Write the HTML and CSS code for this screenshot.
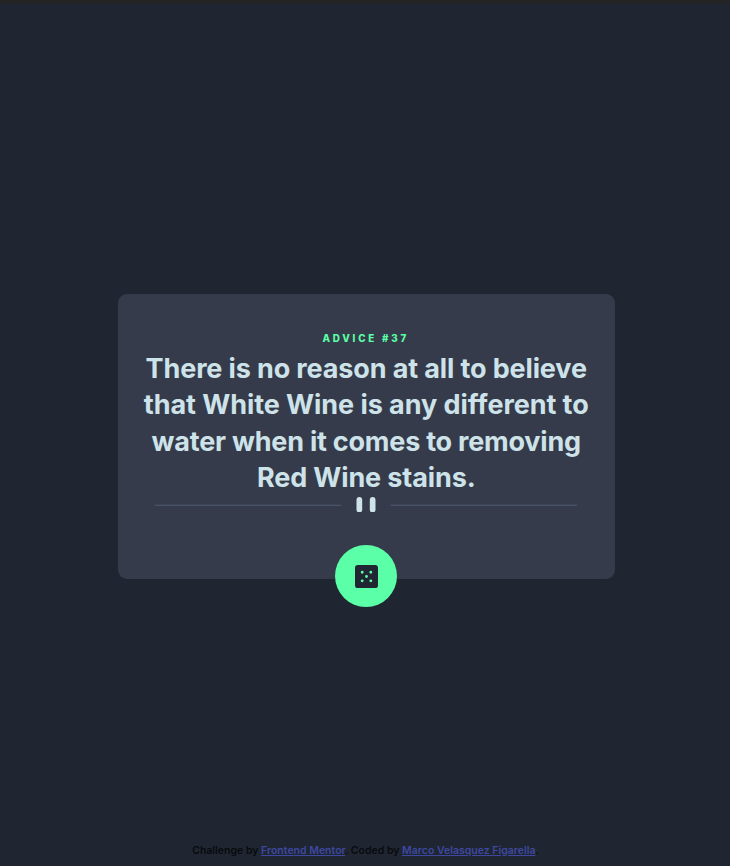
FILE: index.html
```html
<!DOCTYPE html>
<html lang="en">
<head>
<meta charset="utf-8">
<title>Advice generator</title>
<link rel="stylesheet" href="styles.css">
</head>
<body>
<main class="page">
  <section class="card">
    <h1 class="label">ADVICE #37</h1>
    <p class="quote">
      <span class="line line-1">There is no reason at all to believe</span>
      <span class="line line-2">that White Wine is any different to</span>
      <span class="line line-3">water when it comes to removing</span>
      <span class="line line-4">Red Wine stains.</span>
    </p>
    <svg class="divider" viewBox="0 0 444 16" preserveAspectRatio="none" aria-hidden="true">
      <path fill="#4f5d74" d="M0 8h196v1H0zM248 8h196v1H248z"/>
      <g fill="#cee3e9"><rect x="212" width="6" height="16" rx="3"/><rect x="226" width="6" height="16" rx="3"/></g>
    </svg>
    <button class="dice" aria-label="New advice">
      <svg class="dice-icon" viewBox="0 0 24 24" aria-hidden="true">
        <path fill="#202733" d="M21 0H3a3 3 0 0 0-3 3v18a3 3 0 0 0 3 3h18a3 3 0 0 0 3-3V3a3 3 0 0 0-3-3ZM7.500 18a1.500 1.500 0 1 1 0-3 1.500 1.500 0 0 1 0 3Zm0-9a1.500 1.500 0 1 1 0-3 1.500 1.500 0 0 1 0 3Zm4.500 4.500a1.500 1.500 0 1 1 0-3 1.500 1.500 0 0 1 0 3Zm4.500 4.500a1.500 1.500 0 1 1 0-3 1.500 1.500 0 0 1 0 3Zm0-9a1.500 1.500 0 1 1 0-3 1.500 1.500 0 0 1 0 3Z"/>
      </svg>
    </button>
  </section>
</main>
<footer class="attribution"><span class="by">Challenge by</span> <a class="mentor" href="#">Frontend Mentor</a>. <span class="coded">Coded by</span> <a class="author" href="#">Marco Velasquez Figarella</a>.</footer>
</body>
</html>
```
FILE: styles.css
```css
* { box-sizing: border-box; }

body {
  margin: 0;
  height: 866px;
  display: flex;
  flex-direction: column;
  overflow: hidden;
  background: #1f2631;
  border-top: 4px solid #242424;
  font-family: Inter, "Open Sans", sans-serif;
}

.page {
  flex: 1;
  padding: 290px 0 0 118px;
}

.card {
  position: relative;
  width: 496.500px;
  height: 284.500px;
  padding-top: 38px;
  display: flex;
  flex-direction: column;
  align-items: center;
  background: #353b4a;
  border-radius: 9px;
}

.label {
  margin: 0 1px 0 0;
  height: 19px;
  font-size: 9.800px;
  line-height: 13px;
  font-weight: 800;
  letter-spacing: 2.800px;
  color: #5bffa7;
}

.quote {
  margin: 0;
  display: flex;
  flex-direction: column;
  align-items: center;
  font-size: 27px;
  line-height: 36.300px;
  font-weight: 650;
  color: #cee3e9;
}

.line { white-space: nowrap; }
.line-1 { letter-spacing: -0.130px; }
.line-2 { letter-spacing: -0.060px; }
.line-3 { letter-spacing: -0.220px; }
.line-4 { letter-spacing: -0.120px; }

.divider {
  width: 422px;
  height: 15.500px;
  margin-top: 0.500px;
}

.dice {
  position: absolute;
  left: 217px;
  bottom: -28.500px;
  width: 62px;
  height: 62px;
  padding: 0;
  border: 0;
  border-radius: 50%;
  display: grid;
  place-items: center;
  background: #5bffa7;
}

.dice-icon {
  width: 23px;
  height: 23px;
  margin-top: 1px;
  margin-left: 1px;
}

.attribution {
  height: 23px;
  padding-left: 1px;
  text-align: center;
  white-space: nowrap;
  font-size: 10.500px;
  line-height: 15px;
  font-weight: 600;
  color: #080a0e;
}

.attribution a { color: #3e48a0; }
```
